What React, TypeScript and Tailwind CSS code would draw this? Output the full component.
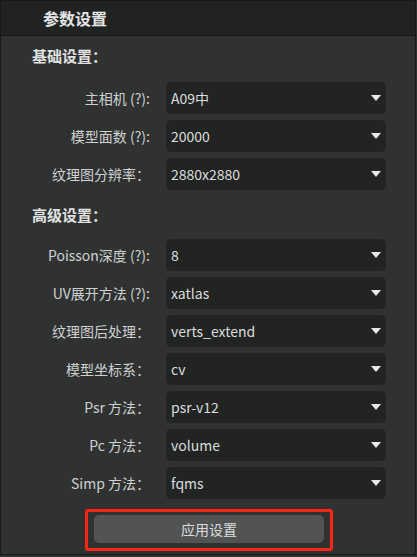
const basic = [
  { label: "主相机 (?):", value: "A09中" },
  { label: "模型面数 (?):", value: "20000" },
  { label: "纹理图分辨率：", value: "2880x2880" },
];

const advanced = [
  { label: "Poisson深度 (?):", value: "8" },
  { label: "UV展开方法 (?):", value: "xatlas" },
  { label: "纹理图后处理：", value: "verts_extend" },
  { label: "模型坐标系：", value: "cv" },
  { label: "Psr 方法：", value: "psr-v12" },
  { label: "Pc 方法：", value: "volume" },
  { label: "Simp 方法：", value: "fqms" },
];

function SelectRow({ label, value }: { label: string; value: string }) {
  return (
    <div className="flex items-center h-8">
      <div className="w-[149px] text-right text-[14px] text-[#cfd1d1] whitespace-nowrap">{label}</div>
      <div className="ml-[16px] w-[220px] h-8 rounded-[5px] bg-[#222424] flex items-center pl-[5px] pr-[5px]">
        <span className="flex-1 text-[14px] text-[#dadcdc]">{value}</span>
        <svg width="10" height="6" viewBox="0 0 10 6">
          <polygon points="0,0 10,0 5,6" fill="#e8e8e8" />
        </svg>
      </div>
    </div>
  );
}

export default function App() {
  return (
    <div
      className="w-[417px] h-[557px] bg-[#2c2f2f]"
      style={{ fontFamily: '"Noto Sans CJK SC", "Noto Sans", sans-serif' }}
    >
      <div className="w-[416px] h-[555px] border border-[#181919] bg-[#303232] flex flex-col">
        {/* Header */}
        <div className="h-[35px] bg-[#212323] border-b border-[#161717] flex items-center pl-[42px]">
          <span className="text-[16px] font-bold text-[#e4e6e6]">参数设置</span>
        </div>

        {/* Basic */}
        <div className="mt-[10px] h-5 flex items-center pl-[31px] text-[15px] font-bold text-[#e0e2e2]">基础设置：</div>
        <div className="mt-[16px] flex flex-col gap-[6px]">
          {basic.map((r) => (
            <SelectRow key={r.label} {...r} />
          ))}
        </div>

        {/* Advanced */}
        <div className="mt-[15px] h-5 flex items-center pl-[31px] text-[15px] font-bold text-[#e0e2e2]">高级设置：</div>
        <div className="mt-[14px] flex flex-col gap-[6px]">
          {advanced.map((r) => (
            <SelectRow key={r.label} {...r} />
          ))}
        </div>

        {/* Apply */}
        <div className="mt-[10px] ml-[84px] w-[248px] border-[3px] border-[#ff2416] rounded-[3px] pt-[3px] pb-[5px] px-[6px]">
          <button className="w-full h-7 rounded-[5px] bg-[#525454] text-[14px] text-[#dcdede]">应用设置</button>
        </div>
      </div>
    </div>
  );
}
